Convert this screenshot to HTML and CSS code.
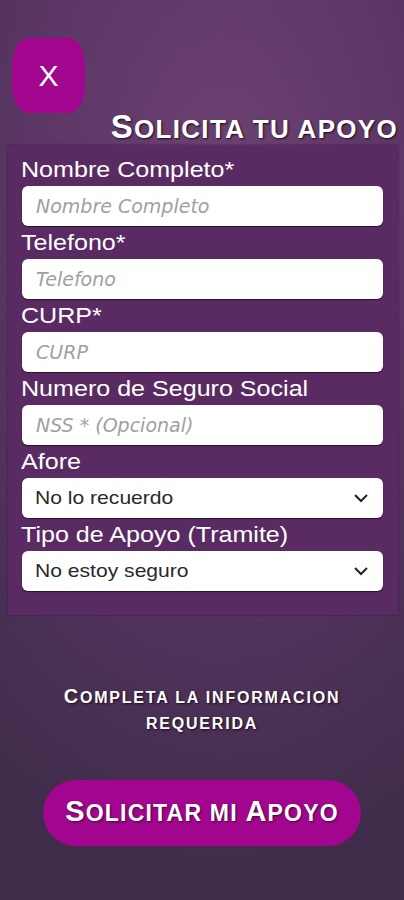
FILE: index.html
```html
<!DOCTYPE html>
<html lang="es">
<head>
    <meta charset="UTF-8">
    <meta name="viewport" content="width=device-width, initial-scale=1.0">
    <title>Solicita tu apoyo</title>
    <link rel="stylesheet" href="styles.css">
</head>
<body>
    <div class="page">
        <div class="top">
            <button class="close" type="button">X</button>
        </div>

        <h1 class="title"><span class="cap">S</span>olicita tu apoyo</h1>

        <form class="panel">
            <label class="label" for="nombre">Nombre Completo*</label>
            <input class="field" type="text" id="nombre" placeholder="Nombre Completo">

            <label class="label" for="telefono">Telefono*</label>
            <input class="field" type="text" id="telefono" placeholder="Telefono">

            <label class="label" for="curp">CURP*</label>
            <input class="field" type="text" id="curp" placeholder="CURP">

            <label class="label" for="nss">Numero de Seguro Social</label>
            <input class="field" type="text" id="nss" placeholder="NSS * (Opcional)">

            <label class="label" for="afore">Afore</label>
            <div class="select" id="afore">
                <span class="select-text">No lo recuerdo</span>
                <svg width="16" height="10" viewBox="0 0 16 10"><path d="M2 2 L8 8 L14 2" fill="none" stroke="#222" stroke-width="2"/></svg>
            </div>

            <label class="label" for="tipo">Tipo de Apoyo (Tramite)</label>
            <div class="select" id="tipo">
                <span class="select-text">No estoy seguro</span>
                <svg width="16" height="10" viewBox="0 0 16 10"><path d="M2 2 L8 8 L14 2" fill="none" stroke="#222" stroke-width="2"/></svg>
            </div>
        </form>

        <p class="notice"><span class="cap">C</span>ompleta la informacion<br>requerida</p>

        <div class="actions">
            <button class="submit" type="button"><span class="cap">S</span>olicitar mi <span class="cap">A</span>poyo</button>
        </div>
    </div>
</body>
</html>
```

FILE: styles.css
```css
body {
    margin: 0;
    padding: 0;
    font-family: "Liberation Sans", Arial, sans-serif;
    color: #fff;
}

.page {
    width: 404px;
    height: 900px;
    overflow: hidden;
    background: radial-gradient(ellipse 420px 700px at 55% 20%, #6d4273 0%, #5c3665 45%, #3f2c4a 100%);
}

.top {
    padding: 38px 0 0 12px;
}

.close {
    width: 73px;
    height: 75px;
    border: none;
    border-radius: 16px / 28px;
    background-color: #a2068e;
    color: #fff;
    font-family: "Liberation Sans", Arial, sans-serif;
    font-size: 30px;
    padding: 0;
    display: block;
}

/* titulos en versalitas */
.title,
.notice,
.submit {
    font-family: "Liberation Sans", Arial, sans-serif;
    font-weight: bold;
    text-transform: uppercase;
    text-shadow: 1px 1px 2px #1a0a1e;
}

.cap {
    line-height: 10px;
}

.title {
    margin: 0 6px 0 0;
    text-align: right;
    font-size: 26px;
    line-height: 32px;
    letter-spacing: 1.3px;
}

.title .cap {
    font-size: 33px;
}

.panel {
    margin: 0 6px 0 8px;
    padding: 8px 15px 24px 13px;
    background-color: #5a2b62;
    box-shadow: 0 0 2px rgba(40, 10, 45, 0.6);
    display: flex;
    flex-direction: column;
}

.label {
    display: block;
    font-size: 22px;
    line-height: 33px;
    color: #fff;
    white-space: nowrap;
    transform: scaleX(1.14);
    transform-origin: left center;
}

.field {
    height: 40px;
    margin: 0 0 0 1px;
    padding: 0 14px;
    border: none;
    border-radius: 6px;
    box-sizing: border-box;
    background-color: #fff;
    box-shadow: 0 1px 1px #2a1030;
    font-family: "DejaVu Sans", sans-serif;
    font-size: 19px;
    font-style: italic;
    outline: none;
}

.field::placeholder {
    color: #a0a0a0;
}

.select {
    height: 40px;
    margin-left: 1px;
    padding: 0 14px 0 13px;
    border-radius: 6px;
    box-sizing: border-box;
    background-color: #fff;
    box-shadow: 0 1px 1px #2a1030;
    display: flex;
    align-items: center;
    justify-content: space-between;
    color: #2a2a2a;
    font-size: 19px;
}

.select-text {
    display: block;
    transform: scaleX(1.11);
    transform-origin: left center;
}

.notice {
    margin: 70px 0 0 0;
    text-align: center;
    font-size: 16px;
    line-height: 26px;
    letter-spacing: 1.8px;
}

.notice .cap {
    font-size: 20px;
}

.actions {
    padding: 0 43px;
    margin-top: 43px;
}

.submit {
    width: 318px;
    height: 66px;
    border: none;
    border-radius: 33px;
    background-color: #a2068e;
    color: #fff;
    font-size: 23px;
    letter-spacing: 1.2px;
    padding: 0;
    text-shadow: 1px 1px 2px #3a0a35;
}

.submit .cap {
    font-size: 29px;
}
```
